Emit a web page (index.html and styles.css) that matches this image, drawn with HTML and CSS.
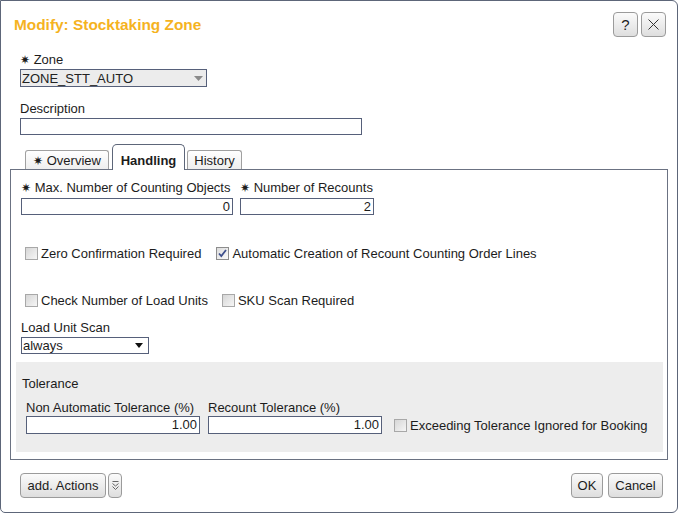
FILE: index.html
```html
<!DOCTYPE html>
<html>
<head>
<meta charset="utf-8">
<title>Modify: Stocktaking Zone</title>
<link rel="stylesheet" href="styles.css">
</head>
<body>
<div class="dialog">
  <div class="header">
    <h1 class="title">Modify: Stocktaking Zone</h1>
    <div class="hbtns">
      <button class="btn ibtn">?</button>
      <button class="btn ibtn"><svg width="11" height="11" viewBox="0 0 11 11"><path d="M0.5 0.5 L10.5 10.5 M10.5 0.5 L0.5 10.5" stroke="#333" stroke-width="1" fill="none"/></svg></button>
    </div>
  </div>

  <div class="top">
    <label class="lbl lbl-zone"><span class="req">✷</span> Zone</label>
    <div class="select select-ro">
      <span>ZONE_STT_AUTO</span>
      <svg width="9" height="5" viewBox="0 0 9 5"><polygon points="0,0 9,0 4.5,5" fill="#8a8a8a"/></svg>
    </div>
    <label class="lbl lbl-desc">Description</label>
    <div class="input input-desc"></div>
  </div>

  <div class="tabs">
    <div class="tab tab-overview"><span class="req">✷</span> Overview</div>
    <div class="tab tab-active">Handling</div>
    <div class="tab tab-history">History</div>
  </div>

  <div class="panel">
    <div class="pcontent">
      <div class="row-fields">
        <div class="field f-max">
          <label class="lbl"><span class="req">✷</span> Max. Number of Counting Objects</label>
          <div class="input num">0</div>
        </div>
        <div class="field f-rec">
          <label class="lbl"><span class="req">✷</span> Number of Recounts</label>
          <div class="input num">2</div>
        </div>
      </div>

      <div class="checkrow cr1">
        <span class="cb"></span><span class="cbl">Zero Confirmation Required</span>
        <span class="cb cb-on cb-gap1"><svg width="11" height="11" viewBox="0 0 11 11"><path d="M2 5.5 L4.3 8 L9 2" stroke="#3d4f8c" stroke-width="1.8" fill="none"/></svg></span><span class="cbl">Automatic Creation of Recount Counting Order Lines</span>
      </div>

      <div class="checkrow cr2">
        <span class="cb"></span><span class="cbl">Check Number of Load Units</span>
        <span class="cb cb-gap2"></span><span class="cbl">SKU Scan Required</span>
      </div>

      <label class="lbl lbl-lus">Load Unit Scan</label>
      <div class="select select-lus">
        <span>always</span>
        <svg width="8" height="5" viewBox="0 0 8 5"><polygon points="0,0 8,0 4,5" fill="#111"/></svg>
      </div>
    </div>

    <div class="graybox">
      <div class="gtitle">Tolerance</div>
      <div class="grow">
        <div class="field f-tol">
          <label class="lbl">Non Automatic Tolerance (%)</label>
          <div class="input num tinput">1.00</div>
        </div>
        <div class="field f-tol">
          <label class="lbl">Recount Tolerance (%)</label>
          <div class="input num tinput">1.00</div>
        </div>
        <div class="gcheck">
          <span class="cb"></span><span class="cbl">Exceeding Tolerance Ignored for Booking</span>
        </div>
      </div>
    </div>
  </div>

  <div class="footer">
    <div class="fleft">
      <button class="btn fbtn b-actions">add. Actions</button>
      <button class="btn fbtn b-more"><svg width="7" height="11" viewBox="0 0 7 11"><path d="M0.5 1.5 H6.5 M0.5 3.5 L3.5 6 L6.5 3.5 M0.5 6.5 L3.5 9.5 L6.5 6.5" stroke="#666" stroke-width="1" fill="none"/></svg></button>
    </div>
    <div class="fright">
      <button class="btn fbtn b-ok">OK</button>
      <button class="btn fbtn b-cancel">Cancel</button>
    </div>
  </div>
</div>
</body>
</html>
```

FILE: styles.css
```css
* { box-sizing: border-box; }
html, body { margin: 0; padding: 0; background: #fff; }
body {
  font-family: "Liberation Sans", Arial, sans-serif;
  font-size: 13px;
  color: #1c1c1c;
}

.dialog {
  width: 678px;
  height: 513px;
  border: 1px solid #5d6679;
  border-radius: 0 6px 6px 5px;
  display: flex;
  flex-direction: column;
  background: #fff;
}

.header {
  display: flex;
  justify-content: space-between;
  align-items: center;
  padding: 11px 11px 0 13px;
  height: 36px;
  flex: none;
}
.title {
  margin: 0;
  font-size: 15.4px;
  font-weight: bold;
  line-height: 18px;
  color: #f5b31f;
}
.hbtns { display: flex; gap: 3px; }

.btn {
  font-family: "Liberation Sans", Arial, sans-serif;
  font-size: 13px;
  color: #1c1c1c;
  border: 1px solid #9b9b9b;
  border-radius: 4px;
  background: linear-gradient(#fbfbfb, #dedede);
  padding: 0;
  display: flex;
  align-items: center;
  justify-content: center;
}
.ibtn { width: 25px; height: 25px; font-size: 15px; }

.req {
  font-family: "DejaVu Sans", sans-serif;
  font-size: 12px;
}

.top { padding-left: 19px; flex: none; }
.lbl { display: block; line-height: 15px; white-space: nowrap; }
.lbl-zone { margin-top: 15px; margin-bottom: 1px; }
.lbl-desc { margin-top: 14px; margin-bottom: 2px; }

.select {
  display: flex;
  justify-content: space-between;
  align-items: center;
  border: 1px solid #56607a;
  line-height: 15px;
}
.select-ro {
  width: 187px;
  height: 18px;
  background: #ececec;
  padding: 0 3px 0 1px;
  color: #222;
}
.select-lus {
  width: 128px;
  height: 17px;
  background: #fff;
  padding: 0 5px 0 1px;
}

.input {
  border: 1px solid #56607a;
  background: #fff;
  height: 17px;
  line-height: 15px;
}
.input-desc { width: 342px; }
.num { text-align: right; padding-right: 2px; }

.tabs {
  display: flex;
  align-items: flex-end;
  gap: 3px;
  margin: 9px 9px 0 9px;
  padding-left: 15px;
  height: 25px;
  flex: none;
  position: relative;
  z-index: 1;
}
.tab {
  height: 19px;
  border: 1px solid #a0a0a0;
  border-bottom: none;
  border-radius: 3px 3px 0 0;
  background: linear-gradient(#ffffff, #eeeeee);
  text-align: center;
  line-height: 15px;
  padding-top: 2px;
}
.tab-overview { width: 84px; }
.tab-history { width: 55px; margin-left: -1px; }
.tab-active {
  width: 73px;
  height: 26px;
  margin-bottom: -1px;
  background: #fff;
  border-color: #5d6679;
  border-radius: 5px 5px 0 0;
  font-weight: bold;
  padding-top: 8px;
}

.panel {
  margin: 0 9px;
  height: 291px;
  border: 1px solid #6b7282;
  flex: none;
}
.pcontent { padding: 10px 10px 0 10px; }

.row-fields { display: flex; gap: 7px; }
.field .lbl { margin-bottom: 2px; }
.f-max { width: 212px; }
.f-rec { width: 134px; }

.checkrow {
  display: flex;
  align-items: center;
  height: 16px;
  padding-left: 4px;
  white-space: nowrap;
}
.cr1 { margin-top: 30px; }
.cr2 { margin-top: 31px; }

.cb {
  width: 13px;
  height: 13px;
  flex: none;
  border: 1px solid #a8a8a8;
  background: linear-gradient(135deg, #d6d6d6, #f6f6f6);
  display: inline-flex;
  align-items: center;
  justify-content: center;
}
.cb-on { border-color: #8d8d8d; background: linear-gradient(135deg, #dcdcdc, #fafafa); }
.cbl { margin-left: 3px; line-height: 15px; }
.cb-gap1 { margin-left: 15px; }
.cb-gap2 { margin-left: 14px; }

.lbl-lus { margin-top: 12px; margin-bottom: 2px; }

.graybox {
  margin: 8px 4px 0 5px;
  height: 90px;
  background: #ededed;
  padding: 14px 0 0 6px;
}
.gtitle { line-height: 15px; }
.grow {
  display: flex;
  align-items: flex-end;
  gap: 8px;
  margin-top: 9px;
  padding-left: 4px;
}
.f-tol { width: 174px; }
.f-tol .lbl { margin-bottom: 1px; }
.tinput { height: 18px; line-height: 16px; }
.gcheck {
  display: flex;
  align-items: center;
  height: 18px;
  margin-left: 4px;
  white-space: nowrap;
}

.footer {
  display: flex;
  justify-content: space-between;
  margin-top: 13px;
  padding: 0 14px 0 19px;
  flex: none;
}
.fleft, .fright { display: flex; }
.fleft { gap: 2px; }
.fright { gap: 5px; }
.fbtn { height: 25px; }
.b-actions { width: 86px; }
.b-more { width: 14px; }
.b-ok { width: 32px; }
.b-cancel { width: 55px; }
```
